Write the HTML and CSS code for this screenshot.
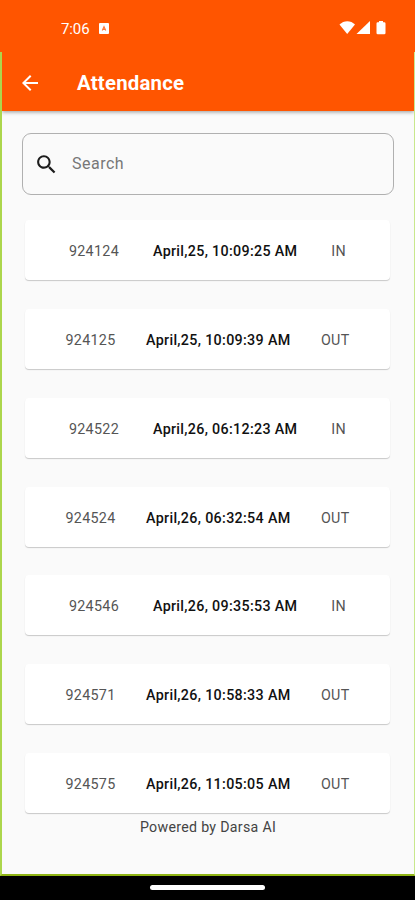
FILE: index.html
```html
<!DOCTYPE html>
<html lang="en">
<head>
    <meta charset="UTF-8">
    <meta name="viewport" content="width=device-width, initial-scale=1.0">
    <title>Attendance</title>
    <link rel="stylesheet" href="styles.css">
</head>
<body>
    <div class="phone">
        <div class="status-bar">
            <span class="time">7:06</span>
            <svg class="app-icon" width="10" height="11" viewBox="0 0 11 12">
                <rect width="11" height="12" rx="1" fill="#fff"/>
                <path d="M3.6 8.3L5.5 4l1.9 4.3M4.4 7h2.2" fill="none" stroke="#ff7a3c" stroke-width="1.3"/>
            </svg>
            <svg class="system-icons" width="48" height="16" viewBox="0 0 48 16">
                <path d="M0.5 4.6C4.8 0 11.8 0 16 4.6L8.2 14z" fill="#fff"/>
                <path d="M31 1v13H17.5z" fill="#fff"/>
                <path d="M40 1h4v1.2h1.2q1.3 0 1.3 1.3V13q0 1.3-1.3 1.3h-6.4q-1.3 0-1.3-1.3V3.5q0-1.3 1.3-1.3H40z" fill="#fff"/>
            </svg>
        </div>

        <div class="app">
            <div class="header">
                <svg class="back-icon" width="24" height="24" viewBox="0 0 24 24">
                    <path d="M20 11H7.83l5.59-5.59L12 4l-8 8 8 8 1.41-1.41L7.83 13H20v-2z" fill="#fff"/>
                </svg>
                <h1 class="title">Attendance</h1>
            </div>

            <div class="content">
                <label class="search-box">
                    <svg width="25" height="25" viewBox="0 0 24 24">
                        <path d="M15.5 14h-.79l-.28-.27C15.41 12.59 16 11.11 16 9.5 16 5.91 13.09 3 9.5 3S3 5.91 3 9.5 5.91 16 9.5 16c1.61 0 3.09-.59 4.23-1.57l.27.28v.79l5 4.99L20.49 19l-4.99-5zm-6 0C7.01 14 5 11.99 5 9.5S7.01 5 9.5 5 14 7.01 14 9.5 11.99 14 9.5 14z" fill="#1c1c1c"/>
                    </svg>
                    <input type="text" class="search-input" placeholder="Search">
                </label>

                <div class="list">
                    <div class="card">
                        <span>924124</span>
                        <span class="date">April,25, 10:09:25 AM</span>
                        <span>IN</span>
                    </div>
                    <div class="card">
                        <span>924125</span>
                        <span class="date">April,25, 10:09:39 AM</span>
                        <span>OUT</span>
                    </div>
                    <div class="card">
                        <span>924522</span>
                        <span class="date">April,26, 06:12:23 AM</span>
                        <span>IN</span>
                    </div>
                    <div class="card">
                        <span>924524</span>
                        <span class="date">April,26, 06:32:54 AM</span>
                        <span>OUT</span>
                    </div>
                    <div class="card">
                        <span>924546</span>
                        <span class="date">April,26, 09:35:53 AM</span>
                        <span>IN</span>
                    </div>
                    <div class="card">
                        <span>924571</span>
                        <span class="date">April,26, 10:58:33 AM</span>
                        <span>OUT</span>
                    </div>
                    <div class="card">
                        <span>924575</span>
                        <span class="date">April,26, 11:05:05 AM</span>
                        <span>OUT</span>
                    </div>
                </div>

                <div class="footer">Powered by Darsa AI</div>
            </div>
        </div>

        <div class="nav-bar">
            <div class="nav-pill"></div>
        </div>
    </div>
</body>
</html>
```
FILE: styles.css
```css
* {
    box-sizing: border-box;
}

body {
    margin: 0;
    font-family: Roboto, sans-serif;
    background-color: #000;
}

.phone {
    display: flex;
    flex-direction: column;
    width: 415px;
    height: 900px;
    overflow: hidden;
}

/* android status bar */
.status-bar {
    display: flex;
    align-items: center;
    height: 52px;
    padding: 4px 28px 0 61px;
    background-color: #ff5500;
    color: #fff;
}

.time {
    padding-top: 1px;
    font-size: 15px;
    letter-spacing: -0.1px;
}

.app-icon {
    margin-left: 9px;
}

.system-icons {
    margin-left: auto;
}

.app {
    display: flex;
    flex-direction: column;
    height: 824px;
    border-left: 2px solid #acd64c;
    border-right: 1px solid #c8e88c;
    border-bottom: 2px solid #8fb414;
    background-color: #fafafa;
}

.header {
    display: flex;
    align-items: center;
    height: 59px;
    padding: 3px 16px 0;
    background-color: #ff5500;
    box-shadow: 0 1px 4px rgba(0, 0, 0, 0.4);
    clip-path: inset(0 0 -8px 0);
}

.title {
    margin: 0 0 0 35px;
    font-size: 20.4px;
    font-weight: 700;
    line-height: 24px;
    letter-spacing: 0.2px;
    color: #fff;
}

.content {
    padding: 22px 20px 0 20px;
}

.search-box {
    display: flex;
    align-items: center;
    width: 372px;
    height: 62px;
    padding-left: 11px;
    border: 1px solid #b0b0b0;
    border-radius: 9px;
}

.search-input {
    width: 200px;
    margin-left: 13px;
    padding: 0 0 2px;
    border: none;
    outline: none;
    background: none;
    font-family: inherit;
    font-size: 16px;
    letter-spacing: 0.5px;
}

.search-input::placeholder {
    color: #777;
}

.list {
    display: flex;
    flex-direction: column;
    gap: 28.85px;
    padding: 25px 4px 0 3px;
}

.card {
    display: flex;
    align-items: center;
    justify-content: space-evenly;
    width: 365px;
    height: 60px;
    padding: 2px 10px 0;
    border-radius: 4px;
    background-color: #fff;
    box-shadow: 0 1px 1px rgba(0, 0, 0, 0.2);
    font-size: 14.3px;
    letter-spacing: 0.32px;
    color: #555;
}

.date {
    font-weight: 500;
    color: #111;
}

.footer {
    margin-top: 5px;
    font-size: 14.2px;
    line-height: 18px;
    letter-spacing: 0.3px;
    text-align: center;
    color: #444;
}

/* gesture navigation */
.nav-bar {
    display: flex;
    justify-content: center;
    height: 24px;
    padding-top: 9px;
    background-color: #000;
}

.nav-pill {
    width: 115px;
    height: 5px;
    border-radius: 3px;
    background-color: #fff;
}
```
